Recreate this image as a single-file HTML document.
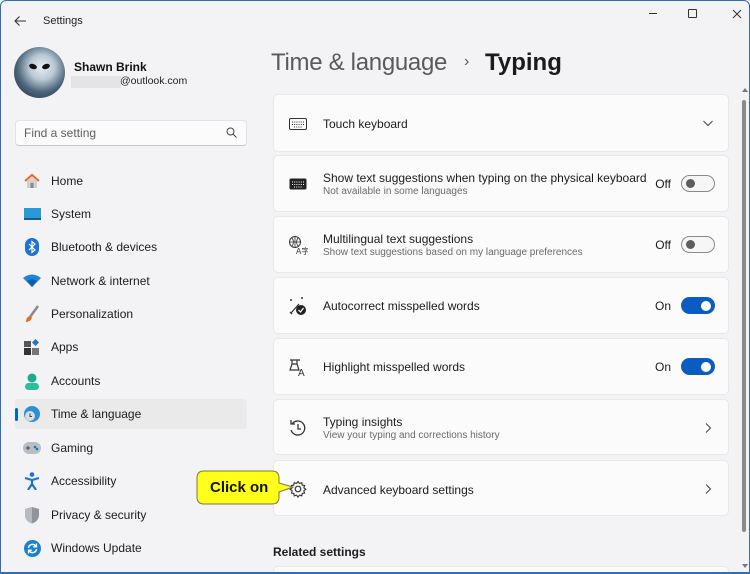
<!DOCTYPE html>
<html><head><meta charset="utf-8"><style>
*{margin:0;padding:0;box-sizing:border-box}
html,body{width:750px;height:574px;overflow:hidden}
body{background:#f3f3f3;font-family:"Liberation Sans",sans-serif;color:#1b1b1b;position:relative}
.frame{position:absolute;left:0;top:0;width:750px;height:574px;border:1px solid #2f6fb3;border-radius:6px 6px 0 0;background:#f3f3f5}
.abs{position:absolute}
.nav{position:absolute;left:15px;width:232px;height:30px;display:flex;align-items:center;font-size:12px;color:#1b1b1b}
.nav .ic{width:18px;height:18px;margin-left:8px;margin-right:10px;display:flex;align-items:center;justify-content:center}
.sel{background:#eaeaea;border-radius:4px}
.sel::before{content:"";position:absolute;left:0;top:9px;width:3px;height:13px;background:#0067c0;border-radius:2px}
.card{position:absolute;left:273px;width:456px;background:#fbfbfb;border:1px solid #e8e8e8;border-radius:5px;overflow:hidden}
.card .t{position:absolute;left:49px;font-size:12px;color:#1b1b1b}
.card .s{position:absolute;left:49px;font-size:10px;color:#6b6b6b}
.card .ico{position:absolute;left:14px;width:20px;height:20px}
.lbl{position:absolute;right:57px;font-size:12px;color:#1b1b1b}
.tog{position:absolute;right:13px;width:34px;height:17px;border-radius:9px}
.off{border:1px solid #8a8a8a;background:#f6f6f6}
.off::after{content:"";position:absolute;left:4px;top:3px;width:9px;height:9px;border-radius:50%;background:#5d5d5d}
.on{background:#0b5cc1}
.on::after{content:"";position:absolute;right:4px;top:3.5px;width:10px;height:10px;border-radius:50%;background:#fff}
.chev{position:absolute;right:14px;width:12px;height:12px}
</style></head><body>
<div class="frame"></div>
<svg class="abs" style="left:13px;top:14px" width="14" height="14" viewBox="0 0 14 14"><path d="M13 7H2M6.5 2.5 2 7l4.5 4.5" stroke="#333" stroke-width="1.1" fill="none"/></svg>
<div class="abs" style="left:43px;top:15px;font-size:11px;color:#222">Settings</div>
<div class="abs" style="left:649px;top:13px;width:8px;height:1px;background:#333"></div>
<div class="abs" style="left:688px;top:9px;width:9px;height:9px;border:1px solid #333;border-radius:1px"></div>
<svg class="abs" style="left:732px;top:9px" width="10" height="10"><path d="M1 1l8 8M9 1 1 9" stroke="#333" stroke-width="1"/></svg>
<div class="abs" style="left:14px;top:47px;width:51px;height:51px;border-radius:50%;background:radial-gradient(circle at 55% 40%,#e9eef3 0,#b9c8d4 30%,#4b6479 60%,#1c2b3a 100%)"></div>
<div class="abs" style="left:29px;top:64px;width:8px;height:5px;background:#111;border-radius:50%;transform:rotate(20deg)"></div>
<div class="abs" style="left:42px;top:64px;width:8px;height:5px;background:#111;border-radius:50%;transform:rotate(-20deg)"></div>
<div class="abs" style="left:74px;top:60px;font-size:12px;font-weight:bold;color:#111">Shawn Brink</div>
<div class="abs" style="left:71px;top:76px;width:50px;height:12px;background:#e4e4e4"></div>
<div class="abs" style="left:120px;top:75px;font-size:10.5px;color:#222">@outlook.com</div>
<div class="abs" style="left:15px;top:120px;width:232px;height:26px;background:#fbfbfb;border:1px solid #e3e3e3;border-bottom:1px solid #c8c8c8;border-radius:4px"></div>
<div class="abs" style="left:24px;top:126px;font-size:12px;color:#5f5f5f">Find a setting</div>
<svg class="abs" style="left:226px;top:127px" width="11" height="11"><circle cx="4.5" cy="4.5" r="3.5" stroke="#444" fill="none"/><path d="M7 7l3.5 3.5" stroke="#444"/></svg>
<div class="nav" style="top:166px"><span class="ic"><svg width="18" height="16"><path d="M2 8 9 2l7 6" stroke="#e0692b" stroke-width="2" fill="none"/><path d="M4 8v7h10V8L9 4z" fill="#cfcfcf"/><rect x="7.5" y="10" width="3" height="5" fill="#8a8a8a"/></svg></span>Home</div>
<div class="nav" style="top:199px"><span class="ic"><svg width="17" height="13"><rect x="0" y="0" width="17" height="11" fill="#2a9ad6"/><rect x="0" y="10" width="17" height="2" fill="#1b5b8c"/></svg></span>System</div>
<div class="nav" style="top:232px"><span class="ic"><svg width="14" height="18"><rect width="14" height="18" rx="7" fill="#1a73d6"/><path d="M4 6l6 6-3 2.5v-11L10 6 4 12" stroke="#fff" stroke-width="1.2" fill="none"/></svg></span>Bluetooth &amp; devices</div>
<div class="nav" style="top:266px"><span class="ic"><svg width="18" height="14"><path d="M0 4Q9-3 18 4L9 13z" fill="#1b86d8"/><path d="M4 7Q9 3.5 14 7L9 13z" fill="#0f5fb0"/></svg></span>Network &amp; internet</div>
<div class="nav" style="top:299px"><span class="ic"><svg width="16" height="18"><path d="M14 1 6 12" stroke="#8a8a8a" stroke-width="2.5"/><path d="M6 11q-4 1-4 6 4 0 6-4z" fill="#e66d1f"/></svg></span>Personalization</div>
<div class="nav" style="top:332px"><span class="ic"><svg width="16" height="16"><rect x="0" y="2" width="7" height="6" fill="#555"/><rect x="0" y="9" width="7" height="7" fill="#333"/><rect x="8" y="9" width="7" height="7" fill="#777"/><path d="M11.5 0 15 3.5 11.5 7 8 3.5z" fill="#1a73d6"/></svg></span>Apps</div>
<div class="nav" style="top:366px"><span class="ic"><svg width="16" height="17"><circle cx="8" cy="5" r="4.5" fill="#22a88a"/><rect x="1" y="10" width="14" height="7" rx="3.5" fill="#2bbfa0"/></svg></span>Accounts</div>
<div class="nav sel" style="top:399px"><span class="ic"><svg width="18" height="18"><circle cx="9" cy="9" r="8" fill="#2a8fd6"/><circle cx="7" cy="11" r="5" fill="#d8dde2"/><path d="M7 8.5v3h2" stroke="#444" fill="none"/></svg></span>Time &amp; language</div>
<div class="nav" style="top:433px"><span class="ic"><svg width="18" height="12"><rect width="18" height="12" rx="6" fill="#b9bec4"/><circle cx="12" cy="5" r="1.3" fill="#1a73d6"/><circle cx="14" cy="7" r="1.3" fill="#1a73d6"/><path d="M3 6h4M5 4v4" stroke="#555" stroke-width="1.2"/></svg></span>Gaming</div>
<div class="nav" style="top:466px"><span class="ic"><svg width="16" height="18"><circle cx="8" cy="2.5" r="2.3" fill="#1a73d6"/><path d="M1 6l7 2 7-2M8 8v4l-4 6M8 12l4 6" stroke="#1a73d6" stroke-width="2.2" fill="none"/></svg></span>Accessibility</div>
<div class="nav" style="top:500px"><span class="ic"><svg width="16" height="18"><path d="M8 1 15 3v6c0 5-4 7.5-7 8.5C5 16.5 1 14 1 9V3z" fill="#8f959b"/><path d="M8 1v16.5C5 16.5 1 14 1 9V3z" fill="#b5bbc0"/></svg></span>Privacy &amp; security</div>
<div class="nav" style="top:533px"><span class="ic"><svg width="17" height="17"><circle cx="8.5" cy="8.5" r="8.5" fill="#1a7fd6"/><path d="M4.5 8A4 4 0 0 1 12 6.5M12.5 9A4 4 0 0 1 5 10.5" stroke="#fff" stroke-width="1.4" fill="none"/><path d="M12.5 3.5v3.3H9.2M4.5 13.5v-3.3h3.3" stroke="#fff" stroke-width="1.3" fill="none"/></svg></span>Windows Update</div>
<div class="abs" style="left:271px;top:49px;font-size:24px;color:#5a5a5a;letter-spacing:-0.3px">Time &amp; language</div>
<div class="abs" style="left:464px;top:53px;font-size:16px;color:#5a5a5a">›</div>
<div class="abs" style="left:485px;top:49px;font-size:24px;font-weight:bold;color:#1b1b1b">Typing</div>
<div class="card" style="top:94px;height:58px"><svg class="ico" style="top:19px" viewBox="0 0 20 20"><rect x="1.5" y="4.5" width="17" height="11" rx="1.5" stroke="#333" fill="none"/><path d="M4 8h12M4 10.5h12M6 13h8" stroke="#333" stroke-dasharray="1 1.2"/></svg><div class="t" style="top:22px">Touch keyboard</div><svg class="chev" style="top:22px" viewBox="0 0 12 12"><path d="M1.5 4 6 8.5 10.5 4" stroke="#444" fill="none"/></svg></div>
<div class="card" style="top:155px;height:57px"><svg class="ico" style="top:18px" viewBox="0 0 20 20"><rect x="1.5" y="4.5" width="17" height="11" rx="1.5" fill="#222"/><path d="M4 8h12M4 10.5h12M6 13h8" stroke="#fff" stroke-dasharray="1 1.2"/></svg><div class="t" style="top:15px">Show text suggestions when typing on the physical keyboard</div><div class="s" style="top:30px">Not available in some languages</div><div class="lbl" style="top:21px">Off</div><div class="tog off" style="top:19px"></div></div>
<div class="card" style="top:216px;height:57px"><svg class="ico" style="top:18px" viewBox="0 0 20 20"><circle cx="7" cy="7" r="5.5" stroke="#333" fill="none"/><path d="M1.5 7h11M7 1.5v11M4 3q3 4 0 8M10 3q-3 4 0 8" stroke="#333" fill="none" stroke-width=".8"/><text x="8" y="19" font-size="8" font-family="Liberation Sans" fill="#333">A字</text></svg><div class="t" style="top:15px">Multilingual text suggestions</div><div class="s" style="top:30px">Show text suggestions based on my language preferences</div><div class="lbl" style="top:21px">Off</div><div class="tog off" style="top:19px"></div></div>
<div class="card" style="top:277px;height:57px"><svg class="ico" style="top:18px" viewBox="0 0 20 20"><path d="M3 17 11 8M2 16l2 2" stroke="#333" stroke-width="1.3"/><circle cx="3" cy="4" r="1" fill="#333"/><circle cx="14" cy="2" r="1" fill="#333"/><circle cx="13" cy="14" r="5" fill="#222"/><path d="M10.5 14l2 2 3-4" stroke="#fff" fill="none" stroke-width="1.2"/></svg><div class="t" style="top:21px">Autocorrect misspelled words</div><div class="lbl" style="top:21px">On</div><div class="tog on" style="top:19px"></div></div>
<div class="card" style="top:338px;height:57px"><svg class="ico" style="top:18px" viewBox="0 0 20 20"><path d="M2 3h10M4 3v4l-2 6h9l-2-6V3M4 7h5" stroke="#333" fill="none" stroke-width="1.2"/><text x="10" y="19" font-size="10" font-family="Liberation Sans" fill="#333">A</text></svg><div class="t" style="top:21px">Highlight misspelled words</div><div class="lbl" style="top:21px">On</div><div class="tog on" style="top:19px"></div></div>
<div class="card" style="top:399px;height:56px"><svg class="ico" style="top:18px" viewBox="0 0 20 20"><path d="M4 6A7 7 0 1 1 3 12" stroke="#333" fill="none" stroke-width="1.3"/><path d="M3 2v4h4M10 6v5h3" stroke="#333" fill="none" stroke-width="1.3"/></svg><div class="t" style="top:15px">Typing insights</div><div class="s" style="top:30px">View your typing and corrections history</div><svg class="chev" style="top:22px" viewBox="0 0 12 12"><path d="M4 1.5 8.5 6 4 10.5" stroke="#444" fill="none"/></svg></div>
<div class="card" style="top:460px;height:56px"><svg class="ico" style="top:18px" viewBox="0 0 20 20"><circle cx="10" cy="10" r="2.8" stroke="#333" fill="none" stroke-width="1.2"/><path d="M10 2.5l1.5 2 2.3-.8.4 2.4 2.4.4-.8 2.3 2 1.5-2 1.5.8 2.3-2.4.4-.4 2.4-2.3-.8-1.5 2-1.5-2-2.3.8-.4-2.4-2.4-.4.8-2.3-2-1.5 2-1.5-.8-2.3 2.4-.4.4-2.4 2.3.8z" stroke="#333" fill="none" stroke-width="1.1"/></svg><div class="t" style="top:22px">Advanced keyboard settings</div><svg class="chev" style="top:22px" viewBox="0 0 12 12"><path d="M4 1.5 8.5 6 4 10.5" stroke="#444" fill="none"/></svg></div>
<div class="abs" style="left:273px;top:545px;font-size:12px;font-weight:bold;color:#1b1b1b">Related settings</div>
<div class="card" style="top:566px;height:7px;border-bottom:none;border-radius:5px 5px 0 0"></div>
<div class="abs" style="left:0;top:572px;width:750px;height:2px;background:#2f6fb3"></div>
<div class="abs" style="left:742px;top:88px;width:0;height:0;border-left:3px solid transparent;border-right:3px solid transparent;border-bottom:4px solid #777"></div>
<div class="abs" style="left:742px;top:100px;width:4px;height:432px;background:#8a8a8a;border-radius:2px"></div>
<div class="abs" style="left:742px;top:564px;width:0;height:0;border-left:3px solid transparent;border-right:3px solid transparent;border-top:4px solid #777"></div>
<svg class="abs" style="left:196px;top:470px" width="100" height="38"><path d="M8 1H76Q83 1 83 8V13L97 17 83 22V27Q83 34 76 34H8Q1 34 1 27V8Q1 1 8 1z" fill="#ffff1a" stroke="#7a7a3a" stroke-width="1"/></svg>
<div class="abs" style="left:210px;top:479px;font-size:15px;font-weight:bold;color:#111">Click on</div>
</body></html>
